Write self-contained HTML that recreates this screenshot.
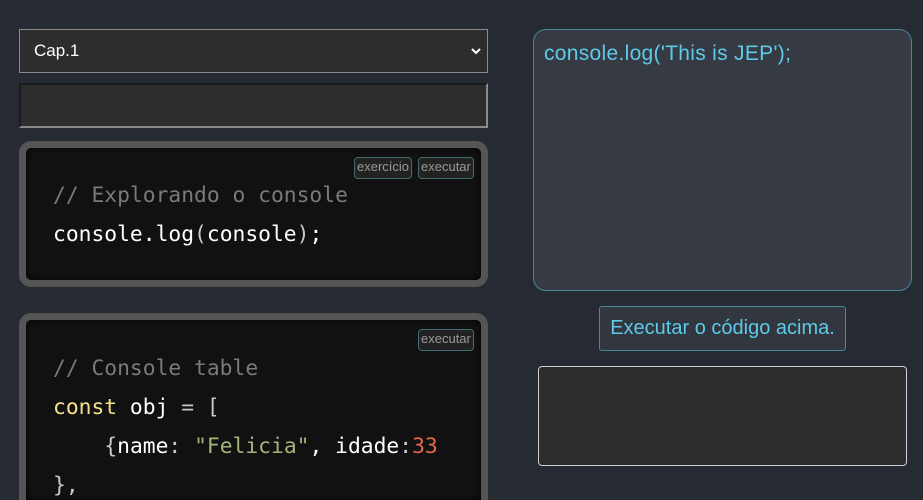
<!DOCTYPE html>
<html style="overflow:hidden;height:500px"><head><style>
body{margin:0;width:923px;height:500px;background:#262a33;overflow:hidden;position:relative;font-family:"Liberation Sans",sans-serif}
.a{position:absolute;box-sizing:border-box}
.sel{left:19px;top:29px;width:469px;height:44px;background:#2d2d2d;border:1px solid #8a8a8a;color:#fff;font-size:17px;padding:11px 0 0 14px}
.inp{left:19px;top:83px;width:469px;height:45px;background:#2d2d2d;border:2px solid;border-color:#1b1b1b #8a8a8a #8a8a8a #1b1b1b}
.box{left:19px;width:469px;border:7px solid #555;border-radius:12px;background:#111;box-shadow:inset 0 0 6px #000}
.btn{position:absolute;top:9px;height:20px;border:1px solid #3f6f70;border-radius:4px;color:#9a9a9a;font-size:13px;line-height:18px;padding:0 2px;background:#222}
.code{position:absolute;left:27px;font-family:"DejaVu Sans Mono",monospace;font-size:21.3px;line-height:39px;color:#fff;white-space:pre}
.c{color:#7a7a7a}.k{color:#f7e08a}.s{color:#a3b47a}.n{color:#e4664a}.p{color:#c8c8c8}
</style></head><body>
<div class="a sel">Cap.1<svg style="position:absolute;right:6px;top:17px" width="10" height="8"><path d="M1 2 L5 6 L9 2" stroke="#fff" stroke-width="2" fill="none"/></svg></div>
<div class="a inp"></div>
<div class="a box" style="top:141px;height:146px">
<div class="btn" style="left:328px">exercício</div><div class="btn" style="left:392px">executar</div>
<div class="code" style="top:28px"><span class="c">// Explorando o console</span>
console.log<span class="p">(</span>console<span class="p">)</span>;</div>
</div>
<div class="a box" style="top:313px;height:187px;border-bottom:0;border-radius:12px 12px 0 0">
<div class="btn" style="left:392px">executar</div>
<div class="code" style="top:29px"><span class="c">// Console table</span>
<span class="k">const</span> obj <span class="p">= [</span>
    <span class="p">{</span>name<span class="p">:</span> <span class="s">"Felicia"</span>, idade<span class="p">:</span><span class="n">33</span>
<span class="p">},</span></div>
</div>
<div class="a" style="left:533px;top:29px;width:379px;height:262px;background:#363a43;border:1px solid #4b8796;border-radius:13px;color:#5ccbe9;font-size:21px;letter-spacing:0.3px;padding:12px 0 0 10px">console.log('This is JEP');</div>
<div class="a" style="left:599px;top:306px;width:247px;height:45px;background:#32363e;border:1px solid #4b8796;border-radius:3px;color:#5ccbe9;font-size:20px;text-align:center;line-height:43px">Executar o código acima.</div>
<div class="a" style="left:538px;top:366px;width:369px;height:100px;background:#2d2d2d;border:1px solid #d0d0d0;border-radius:4px"></div>
</body></html>
